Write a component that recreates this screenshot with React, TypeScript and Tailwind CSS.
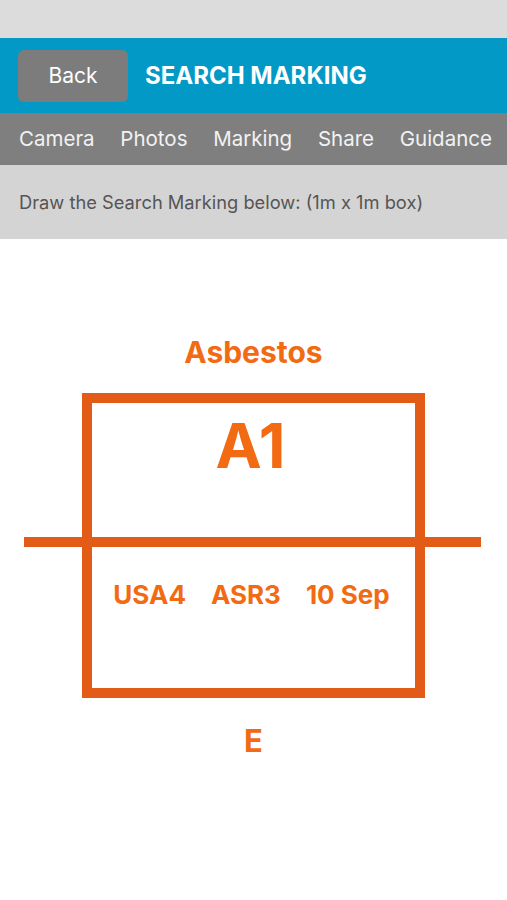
import React from "react";

export default function App() {
  return (
    <div className="w-[507px] h-[900px] bg-white flex flex-col" style={{ fontFamily: "Inter, 'Noto Sans', sans-serif" }}>
      <div className="h-[38px] bg-[#dcdcdc]" />
      <div className="h-[75px] bg-[#0399c6] flex items-center pl-[18px]">
        <div className="w-[110px] h-[52px] rounded-[6px] bg-[#7c7c7c] flex items-center justify-center text-white text-[21px] leading-none">
          Back
        </div>
        <div className="ml-[17px] text-white font-bold text-[24px] leading-none">SEARCH MARKING</div>
      </div>
      <div className="h-[52px] bg-[#7f7f7f] flex items-center justify-between pl-[19px] pr-[15px] text-[#f2f2f2] text-[20.5px] leading-none">
        <span>Camera</span>
        <span>Photos</span>
        <span>Marking</span>
        <span>Share</span>
        <span>Guidance</span>
      </div>
      <div className="h-[74px] bg-[#d4d4d4] flex items-center pl-[19px] text-[#555555] text-[18.3px] leading-none">
        Draw the Search Marking below: (1m x 1m box)
      </div>
      <div className="flex flex-col items-center pt-[98px]">
        <div className="text-[#f26a12] font-bold text-[30px] leading-none">Asbestos</div>
        <div className="mt-[26px] w-full flex flex-col items-center">
          <div className="w-[343px] h-[144px] border-[10px] border-b-0 border-[#e25c17] flex justify-center pt-[12px]">
            <span className="text-[#f26a12] font-bold text-[62px] leading-none mr-[6px]">A1</span>
          </div>
          <div className="w-[457px] h-[10px] bg-[#e25c17] ml-[-2px]" />
          <div className="w-[343px] h-[151px] border-[10px] border-t-0 border-[#e25c17] flex justify-center gap-[25px] pt-[35px] pr-[4px] text-[#f26a12] font-bold text-[26px] leading-none">
            <span>USA4</span>
            <span>ASR3</span>
            <span>10 Sep</span>
          </div>
        </div>
        <div className="mt-[27px] text-[#f26a12] font-bold text-[31px] leading-none">E</div>
      </div>
    </div>
  );
}
